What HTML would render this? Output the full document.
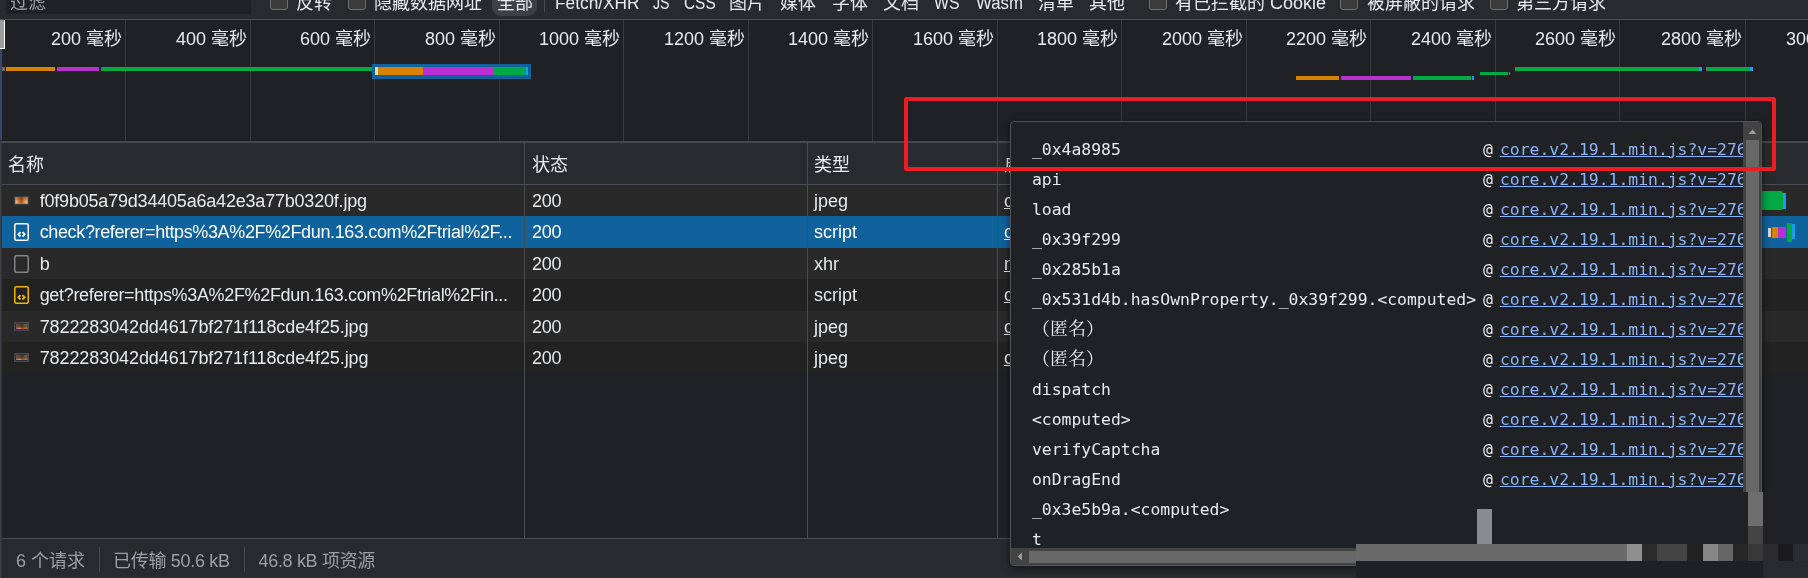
<!DOCTYPE html>
<html lang="zh-CN">
<head>
<meta charset="utf-8">
<title>DevTools Network</title>
<style>
html,body{margin:0;padding:0;}
body{width:1808px;height:578px;overflow:hidden;background:#202124;position:relative;
  font-family:"Liberation Sans","Noto Sans CJK SC",sans-serif;font-size:18px;color:#e8eaed;}
.abs{position:absolute;}
#wrap{position:absolute;left:0;top:0;width:1808px;height:578px;overflow:hidden;will-change:transform;}
/* top toolbar */
#tb{left:0;top:0;width:1808px;height:19px;background:#292a2d;border-bottom:1px solid #494c50;}
#tb span.t{position:absolute;top:-8.6px;line-height:24px;white-space:nowrap;color:#e8eaed;}
#filter{left:6px;top:-12px;width:245px;height:26px;background:#202124;}
.cb{position:absolute;top:-7px;width:15.8px;height:15px;border:1.5px solid #6d6f73;border-radius:3px;background:#3b3b3b;}
/* overview */
#ov{left:0;top:20px;width:1808px;height:121px;background:#202124;}
.gl{position:absolute;top:0;width:1px;height:121px;background:#3a3b3e;}
.lb{position:absolute;top:7px;line-height:24px;text-align:right;white-space:nowrap;color:#e8eaed;}
.bar{position:absolute;height:3.5px;}
/* table */
#thead{left:2px;top:143px;width:1806px;height:41px;background:#292a2d;border-bottom:1px solid #494c50;}
.row{position:absolute;left:2px;width:1806px;height:31.5px;}
.cell{position:absolute;line-height:31.5px;white-space:nowrap;top:1px;}
.vl{position:absolute;width:1px;background:#494c50;top:143px;height:395px;}
#sb{left:2px;top:538px;width:1806px;height:40px;background:#292a2d;border-top:1px solid #494c50;}
/* popup */
#pop{left:1010px;top:121px;width:750px;height:443px;background:#202124;border:1px solid #505256;border-radius:4px;
  box-shadow:0 2px 7px 1px rgba(0,0,0,.45);overflow:hidden;}
.pr{position:absolute;left:0;height:30px;line-height:30px;white-space:nowrap;font-family:"DejaVu Sans Mono","Liberation Mono","Noto Serif CJK SC",monospace;font-size:16.4px;color:#e8eaed;}
.pr .fn{position:absolute;left:21px;}
.pr .at{position:absolute;left:472px;}
.pr a{position:absolute;left:489px;color:#8ab4f8;text-decoration:underline;}
</style>
</head>
<body>
<div id="wrap">

<!-- top toolbar -->
<div id="tb" class="abs">
  <div id="filter" class="abs"></div>
  <span class="t" style="left:10px;color:#9aa0a6">过滤</span>
  <div class="cb" style="left:270px"></div><span class="t" style="left:296px">反转</span>
  <div class="cb" style="left:348px"></div><span class="t" style="left:374px">隐藏数据网址</span>
  <div class="abs" style="left:492px;top:-10px;width:45px;height:25.5px;border-radius:9px;background:#3e3f42"></div>
  <span class="t" style="left:497px">全部</span>
  <div class="abs" style="left:544px;top:-6px;width:1px;height:18px;background:#494c50"></div>
  <span class="t" style="left:555px;transform:scaleX(0.961);transform-origin:0 50%">Fetch/XHR</span>
  <span class="t" style="left:652.5px;transform:scaleX(0.79);transform-origin:0 50%">JS</span>
  <span class="t" style="left:684px;transform:scaleX(0.855);transform-origin:0 50%">CSS</span>
  <span class="t" style="left:729px">图片</span>
  <span class="t" style="left:780px">媒体</span>
  <span class="t" style="left:832px">字体</span>
  <span class="t" style="left:883px">文档</span>
  <span class="t" style="left:934px;transform:scaleX(0.883);transform-origin:0 50%">WS</span>
  <span class="t" style="left:976px;transform:scaleX(0.932);transform-origin:0 50%">Wasm</span>
  <span class="t" style="left:1038px">清单</span>
  <span class="t" style="left:1089px">其他</span>
  <div class="cb" style="left:1149px"></div><span class="t" style="left:1175px">有已拦截的 Cookie</span>
  <div class="cb" style="left:1340px"></div><span class="t" style="left:1367px">被屏蔽的请求</span>
  <div class="cb" style="left:1490px"></div><span class="t" style="left:1516px">第三方请求</span>
</div>

<!-- overview -->
<div id="ov" class="abs">
  <div class="gl" style="left:125px"></div>
  <div class="gl" style="left:250px"></div>
  <div class="gl" style="left:374px"></div>
  <div class="gl" style="left:499px"></div>
  <div class="gl" style="left:623px"></div>
  <div class="gl" style="left:748px"></div>
  <div class="gl" style="left:872px"></div>
  <div class="gl" style="left:997px"></div>
  <div class="gl" style="left:1121px"></div>
  <div class="gl" style="left:1246px"></div>
  <div class="gl" style="left:1370px"></div>
  <div class="gl" style="left:1495px"></div>
  <div class="gl" style="left:1619px"></div>
  <div class="gl" style="left:1745px"></div>
  <div class="lb" style="right:1686px">200 毫秒</div>
  <div class="lb" style="right:1561px">400 毫秒</div>
  <div class="lb" style="right:1437px">600 毫秒</div>
  <div class="lb" style="right:1312px">800 毫秒</div>
  <div class="lb" style="right:1188px">1000 毫秒</div>
  <div class="lb" style="right:1063px">1200 毫秒</div>
  <div class="lb" style="right:939px">1400 毫秒</div>
  <div class="lb" style="right:814px">1600 毫秒</div>
  <div class="lb" style="right:690px">1800 毫秒</div>
  <div class="lb" style="right:565px">2000 毫秒</div>
  <div class="lb" style="right:441px">2200 毫秒</div>
  <div class="lb" style="right:316px">2400 毫秒</div>
  <div class="lb" style="right:192px">2600 毫秒</div>
  <div class="lb" style="right:66px">2800 毫秒</div>
  <div class="lb" style="left:1786px;text-align:left">3000 毫秒</div>
  <!-- handle -->
  <div class="abs" style="left:0;top:0;width:4px;height:28px;background:#9e9e9e;border-right:1px solid #fff;border-bottom:1px solid #fff"></div>
  <div class="abs" style="left:0;top:29px;width:2px;height:91px;background:#3a4766"></div>
  <!-- first request bars -->
  <div class="bar" style="left:2px;top:47px;width:3px;background:#6b6b6b"></div>
  <div class="bar" style="left:6px;top:47px;width:49px;background:#d68100"></div>
  <div class="bar" style="left:57px;top:47px;width:42px;background:#b92fd2"></div>
  <div class="bar" style="left:101px;top:47px;width:272px;background:#00a846"></div>
  <!-- selected -->
  <div class="abs" style="left:372px;top:44px;width:159px;height:15px;background:#10629d"></div>
  <div class="abs" style="left:374.5px;top:47px;width:3.5px;height:8px;background:#d7d7d7"></div>
  <div class="abs" style="left:378px;top:47px;width:45px;height:8px;background:#d68100"></div>
  <div class="abs" style="left:423px;top:47px;width:70px;height:8px;background:#b92fd2"></div>
  <div class="abs" style="left:493px;top:47px;width:33px;height:8px;background:#00a846"></div>
  <div class="abs" style="left:526px;top:47px;width:2px;height:8px;background:#1a9cf0"></div>
  <!-- right bars -->
  <div class="bar" style="left:1296px;top:56px;width:43px;background:#d68100"></div>
  <div class="bar" style="left:1341px;top:56px;width:70px;background:#b92fd2"></div>
  <div class="bar" style="left:1413px;top:56px;width:58px;background:#00a846"></div>
  <div class="bar" style="left:1471.5px;top:56px;width:2px;background:#1a9cf0"></div>
  <div class="bar" style="left:1480px;top:51.5px;width:28px;background:#00a846"></div>
  <div class="bar" style="left:1508.5px;top:51.5px;width:1.5px;background:#1a9cf0"></div>
  <div class="bar" style="left:1515px;top:47px;width:184px;background:#00a846"></div>
  <div class="bar" style="left:1699px;top:47px;width:3px;background:#1a9cf0"></div>
  <div class="bar" style="left:1706px;top:47px;width:2px;background:#6b6b6b"></div>
  <div class="bar" style="left:1708px;top:47px;width:42px;background:#00a846"></div>
  <div class="bar" style="left:1750px;top:47px;width:2.5px;background:#1a9cf0"></div>
</div>

<!-- splitter -->
<div class="abs" style="left:0;top:141px;width:1808px;height:2px;background:#47484c"></div>
<div class="abs" style="left:0;top:141px;width:1px;height:437px;background:#3f4044"></div><div class="abs" style="left:1px;top:143px;width:1px;height:435px;background:#323337"></div>

<!-- table header -->
<div id="thead" class="abs">
  <div class="cell" style="left:6px;top:0;line-height:44px">名称</div>
  <div class="cell" style="left:530px;top:0;line-height:44px">状态</div>
  <div class="cell" style="left:812px;top:0;line-height:44px">类型</div>
  <div class="cell" style="left:1002px;top:0;line-height:44px">启动器</div>
</div>

<!-- rows -->
<div class="row" style="top:185px;height:31px;background:#292929">
  <svg class="abs" style="left:12px;top:11px" width="15" height="9" viewBox="0 0 15 9"><defs><linearGradient id="g1" x1="0" y1="0" x2="1" y2="0"><stop offset="0" stop-color="#f3d2a0"/><stop offset="0.2" stop-color="#d98a45"/><stop offset="0.45" stop-color="#a8461c"/><stop offset="0.62" stop-color="#c8682c"/><stop offset="0.82" stop-color="#e3a055"/><stop offset="1" stop-color="#f0c88c"/></linearGradient><linearGradient id="g1v" x1="0" y1="0" x2="0" y2="1"><stop offset="0" stop-color="#7a2c10" stop-opacity=".35"/><stop offset="0.45" stop-color="#7a2c10" stop-opacity=".25"/><stop offset="0.6" stop-color="#fff" stop-opacity="0"/><stop offset="1" stop-color="#ffe0b0" stop-opacity=".25"/></linearGradient></defs><rect x="0" y="0" width="15" height="9" fill="#3c4046"/><rect x="1.4" y="1.3" width="12.2" height="6.4" fill="url(#g1)"/><rect x="1.4" y="1.3" width="12.2" height="6.4" fill="url(#g1v)"/></svg>
  <div class="cell" style="left:37.7px;letter-spacing:-0.2px">f0f9b05a79d34405a6a42e3a77b0320f.jpg</div>
  <div class="cell" style="left:530px;letter-spacing:-0.3px">200</div>
  <div class="cell" style="left:812px">jpeg</div>
  <div class="cell" style="left:1002px;text-decoration:underline">core.v2.19.1.min.js</div>
</div>
<div class="row" style="top:216px;height:32px;background:#10629d;color:#fff">
  <svg class="abs" style="left:12px;top:6.5px" width="15" height="18" viewBox="0 0 15 18"><rect x="0.75" y="0.75" width="13.5" height="16.5" rx="1.5" fill="none" stroke="#ffffff" stroke-width="1.5"/><path d="M6.5 9.1 L4.4 11.3 L6.5 13.5 M8.5 9.1 L10.6 11.3 L8.5 13.5" fill="none" stroke="#ffffff" stroke-width="1.9"/></svg>
  <div class="cell" style="left:37.7px;letter-spacing:-0.365px">check?referer=https%3A%2F%2Fdun.163.com%2Ftrial%2F...</div>
  <div class="cell" style="left:530px;letter-spacing:-0.3px">200</div>
  <div class="cell" style="left:812px">script</div>
  <div class="cell" style="left:1002px;text-decoration:underline">core.v2.19.1.min.js</div>
</div>
<div class="row" style="top:248px;height:31px;background:#292929">
  <svg class="abs" style="left:12px;top:6.5px" width="15" height="18" viewBox="0 0 15 18"><rect x="0.75" y="0.75" width="13.5" height="16.5" rx="1.5" fill="none" stroke="#80868b" stroke-width="1.5"/></svg>
  <div class="cell" style="left:37.7px">b</div>
  <div class="cell" style="left:530px;letter-spacing:-0.3px">200</div>
  <div class="cell" style="left:812px">xhr</div>
  <div class="cell" style="left:1002px;text-decoration:underline">nocaptcha.js</div>
</div>
<div class="row" style="top:279px;height:32px;background:#222222">
  <svg class="abs" style="left:12px;top:6.5px" width="15" height="18" viewBox="0 0 15 18"><rect x="0.75" y="0.75" width="13.5" height="16.5" rx="1.5" fill="none" stroke="#f2b600" stroke-width="1.5"/><path d="M6.5 9.1 L4.4 11.3 L6.5 13.5 M8.5 9.1 L10.6 11.3 L8.5 13.5" fill="none" stroke="#f2b600" stroke-width="1.9"/></svg>
  <div class="cell" style="left:37.7px;letter-spacing:-0.335px">get?referer=https%3A%2F%2Fdun.163.com%2Ftrial%2Fin...</div>
  <div class="cell" style="left:530px;letter-spacing:-0.3px">200</div>
  <div class="cell" style="left:812px">script</div>
  <div class="cell" style="left:1002px;text-decoration:underline">core.v2.19.1.min.js</div>
</div>
<div class="row" style="top:311px;height:31px;background:#292929">
  <svg class="abs" style="left:12px;top:11px" width="15" height="9" viewBox="0 0 15 9"><defs><linearGradient id="g2" x1="0" y1="0" x2="1" y2="0"><stop offset="0" stop-color="#c0489a"/><stop offset="0.3" stop-color="#d8a090"/><stop offset="0.55" stop-color="#b05838"/><stop offset="1" stop-color="#e07028"/></linearGradient><linearGradient id="g2b" x1="0" y1="0" x2="1" y2="0"><stop offset="0" stop-color="#5c5a3c"/><stop offset="0.3" stop-color="#6a3c38"/><stop offset="0.5" stop-color="#3c3a28"/><stop offset="0.75" stop-color="#5c5430"/><stop offset="1" stop-color="#6c6a50"/></linearGradient></defs><rect x="0" y="0" width="15" height="9" fill="#464a50"/><rect x="1.5" y="1.2" width="12" height="6.3" fill="#15161a"/><rect x="2" y="1.5" width="11.5" height="5.5" fill="url(#g2b)"/><rect x="2" y="5.6" width="11.5" height="1.3" fill="url(#g2)"/></svg>
  <div class="cell" style="left:37.7px;letter-spacing:-0.09px">7822283042dd4617bf271f118cde4f25.jpg</div>
  <div class="cell" style="left:530px;letter-spacing:-0.3px">200</div>
  <div class="cell" style="left:812px">jpeg</div>
  <div class="cell" style="left:1002px;text-decoration:underline">core.v2.19.1.min.js</div>
</div>
<div class="row" style="top:342px;height:32px;background:#222222">
  <svg class="abs" style="left:12px;top:11px" width="15" height="9" viewBox="0 0 15 9"><defs><linearGradient id="g3" x1="0" y1="0" x2="1" y2="0"><stop offset="0" stop-color="#c0489a"/><stop offset="0.3" stop-color="#d8a090"/><stop offset="0.55" stop-color="#b05838"/><stop offset="1" stop-color="#e07028"/></linearGradient><linearGradient id="g3b" x1="0" y1="0" x2="1" y2="0"><stop offset="0" stop-color="#5c5a3c"/><stop offset="0.3" stop-color="#6a3c38"/><stop offset="0.5" stop-color="#3c3a28"/><stop offset="0.75" stop-color="#5c5430"/><stop offset="1" stop-color="#6c6a50"/></linearGradient></defs><rect x="0" y="0" width="15" height="9" fill="#464a50"/><rect x="1.5" y="1.2" width="12" height="6.3" fill="#15161a"/><rect x="2" y="1.5" width="11.5" height="5.5" fill="url(#g3b)"/><rect x="2" y="5.6" width="11.5" height="1.3" fill="url(#g3)"/></svg>
  <div class="cell" style="left:37.7px;letter-spacing:-0.09px">7822283042dd4617bf271f118cde4f25.jpg</div>
  <div class="cell" style="left:530px;letter-spacing:-0.3px">200</div>
  <div class="cell" style="left:812px">jpeg</div>
  <div class="cell" style="left:1002px;text-decoration:underline">core.v2.19.1.min.js</div>
</div>

<!-- column lines -->
<div class="vl" style="left:524px"></div>
<div class="vl" style="left:807px"></div>
<div class="vl" style="left:997px"></div>

<!-- status bar -->
<div id="sb" class="abs">
  <div class="cell" style="left:14px;top:1px;line-height:42px;color:#9aa0a6">6 个请求</div>
  <div class="abs" style="left:97px;top:8px;width:1px;height:25px;background:#494c50"></div>
  <div class="cell" style="left:111px;top:1px;line-height:42px;color:#9aa0a6;letter-spacing:-0.3px">已传输 50.6 kB</div>
  <div class="abs" style="left:242px;top:8px;width:1px;height:25px;background:#494c50"></div>
  <div class="cell" style="left:256.5px;top:1px;line-height:42px;color:#9aa0a6;letter-spacing:-0.32px">46.8 kB 项资源</div>
</div>

<!-- waterfall right of popup -->
<div class="abs" style="left:1762px;top:191px;width:20.5px;height:19px;background:#00a846;border-radius:0 2px 2px 0"></div>
<div class="abs" style="left:1783px;top:192.5px;width:2.7px;height:16px;background:#1a9cf0"></div>
<div class="abs" style="left:1767.5px;top:228px;width:3.2px;height:8.5px;background:#d7d7d7"></div>
<div class="abs" style="left:1772px;top:227.3px;width:6px;height:10.4px;background:#d68100"></div>
<div class="abs" style="left:1778px;top:227.3px;width:7.7px;height:10.4px;background:#b92fd2"></div>
<div class="abs" style="left:1787px;top:223px;width:4.5px;height:19px;background:#00a846"></div>
<div class="abs" style="left:1792.2px;top:224.2px;width:2.5px;height:15px;background:#1a9cf0"></div>

<!-- popup -->
<div id="pop" class="abs">
  <div class="pr" style="top:13px"><span class="fn">_0x4a8985</span><span class="at">@</span><a>core.v2.19.1.min.js?v=2766</a></div>
  <div class="pr" style="top:43px"><span class="fn">api</span><span class="at">@</span><a>core.v2.19.1.min.js?v=2766</a></div>
  <div class="pr" style="top:73px"><span class="fn">load</span><span class="at">@</span><a>core.v2.19.1.min.js?v=2766</a></div>
  <div class="pr" style="top:103px"><span class="fn">_0x39f299</span><span class="at">@</span><a>core.v2.19.1.min.js?v=2766</a></div>
  <div class="pr" style="top:133px"><span class="fn">_0x285b1a</span><span class="at">@</span><a>core.v2.19.1.min.js?v=2766</a></div>
  <div class="pr" style="top:163px"><span class="fn">_0x531d4b.hasOwnProperty._0x39f299.&lt;computed&gt;</span><span class="at">@</span><a>core.v2.19.1.min.js?v=2766</a></div>
  <div class="pr" style="top:193px"><span class="fn" style="font-size:18px;top:-1px">（匿名）</span><span class="at">@</span><a>core.v2.19.1.min.js?v=2766</a></div>
  <div class="pr" style="top:223px"><span class="fn" style="font-size:18px;top:-1px">（匿名）</span><span class="at">@</span><a>core.v2.19.1.min.js?v=2766</a></div>
  <div class="pr" style="top:253px"><span class="fn">dispatch</span><span class="at">@</span><a>core.v2.19.1.min.js?v=2766</a></div>
  <div class="pr" style="top:283px"><span class="fn">&lt;computed&gt;</span><span class="at">@</span><a>core.v2.19.1.min.js?v=2766</a></div>
  <div class="pr" style="top:313px"><span class="fn">verifyCaptcha</span><span class="at">@</span><a>core.v2.19.1.min.js?v=2766</a></div>
  <div class="pr" style="top:343px"><span class="fn">onDragEnd</span><span class="at">@</span><a>core.v2.19.1.min.js?v=2766</a></div>
  <div class="pr" style="top:373px"><span class="fn">_0x3e5b9a.&lt;computed&gt;</span></div>
  <div class="pr" style="top:403px"><span class="fn">t</span></div>
  <!-- scrollbars -->
  <div class="abs" style="left:732px;top:0;width:18px;height:426px;background:#424242"></div>
  <svg class="abs" style="left:733px;top:0" width="17" height="17" viewBox="0 0 17 17"><path d="M4.5 12 L8.5 7.5 L12.5 12 Z" fill="#9d9d9d"/></svg>
  <div class="abs" style="left:735px;top:18px;width:13px;height:390px;background:#686868"></div>
  <div class="abs" style="left:0;top:426px;width:750px;height:17px;background:#424242"></div>
  <svg class="abs" style="left:0;top:426px" width="17" height="17" viewBox="0 0 17 17"><path d="M11 4.5 L6.5 8.5 L11 12.5 Z" fill="#9d9d9d"/></svg>
  <div class="abs" style="left:18px;top:428.5px;width:715px;height:12.5px;background:#686868"></div>
</div>

<!-- red annotation -->
<div class="abs" style="left:904px;top:97px;width:863.7px;height:66px;border:4px solid #ed1c24;border-radius:2px"></div>

<!-- mosaic (pixelated) region -->
<div class="abs" style="left:1356px;top:491.5px;width:392px;height:52.5px;background:#202124"></div>
<div class="abs" style="left:1748px;top:491.5px;width:15px;height:34.5px;background:#6e6e6e"></div>
<div class="abs" style="left:1748px;top:526px;width:15px;height:18px;background:#444444"></div>
<div class="abs" style="left:1763px;top:491.5px;width:45px;height:52.5px;background:#202124"></div>
<div class="abs" style="left:1477px;top:509px;width:15px;height:35px;background:#8a8b8e"></div>
<div class="abs" style="left:1356px;top:544px;width:271px;height:17px;background:#6a6a6a"></div>
<div class="abs" style="left:1627px;top:544px;width:15px;height:17px;background:#8f8d8d"></div>
<div class="abs" style="left:1642px;top:544px;width:15px;height:17px;background:#2b2b2b"></div>
<div class="abs" style="left:1657px;top:544px;width:30px;height:17px;background:#444444"></div>
<div class="abs" style="left:1687px;top:544px;width:16px;height:17px;background:#222222"></div>
<div class="abs" style="left:1703px;top:544px;width:15px;height:17px;background:#878585"></div>
<div class="abs" style="left:1718px;top:544px;width:15px;height:17px;background:#666666"></div>
<div class="abs" style="left:1733px;top:544px;width:15px;height:17px;background:#262626"></div>
<div class="abs" style="left:1748px;top:544px;width:15px;height:17px;background:#383838"></div>
<div class="abs" style="left:1763px;top:544px;width:15px;height:17px;background:#2a2b2f"></div>
<div class="abs" style="left:1778px;top:544px;width:15px;height:17px;background:#1b1b1d"></div>
<div class="abs" style="left:1793px;top:544px;width:15px;height:17px;background:#2c2d30"></div>
<div class="abs" style="left:1356px;top:561px;width:407px;height:17px;background:#1f2023"></div>
<div class="abs" style="left:1763px;top:561px;width:45px;height:17px;background:#292a2d"></div>

</div>
</body>
</html>
